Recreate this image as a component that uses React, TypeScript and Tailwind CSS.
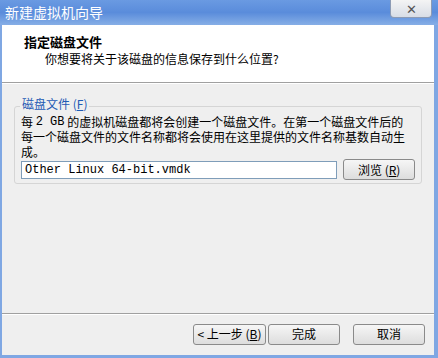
const cjk = "font-['SimSun','Noto_Sans_CJK_SC','Noto_Sans',sans-serif]"
const mono = "font-['Liberation_Mono',monospace]"

function Btn({ children, className = '' }: { children: React.ReactNode; className?: string }) {
  return (
    <button
      className={`flex h-[21px] items-center justify-center rounded-[3px] border border-[#8a8a8a] bg-gradient-to-b from-[#f6f6f6] to-[#dddddd] text-[12px] text-black ${className}`}
    >
      {children}
    </button>
  )
}

export default function App() {
  return (
    <div className={`flex h-[358px] w-[438px] flex-col bg-[#7fa7e3] ${cjk}`}>
      {/* title bar */}
      <div className="flex h-[25px] items-start justify-between bg-gradient-to-b from-[#6a9ae2] via-[#5a8cdb] to-[#86aee6] pl-[5px] pr-[6px]">
        <span className="pt-[4px] text-[14px] leading-[17px] text-white">新建虚拟机向导</span>
        <div className="flex h-[18px] w-[42px] items-center justify-center rounded-b-[4px] border border-t-0 border-[#8c9bb5] bg-gradient-to-b from-[#f4f4f4] to-[#d8dde6] text-[13px] leading-none text-[#555]">
          ✕
        </div>
      </div>

      <div className="mb-[3px] ml-[2px] mr-[4px] flex flex-1 flex-col bg-[#efefef]">
        {/* header */}
        <div className="h-[57px] bg-white pl-[22px] pt-[9px]">
          <p className="text-[13px] font-bold leading-[15px] text-black">指定磁盘文件</p>
          <p className="pl-[21px] pt-[2px] text-[12px] leading-[15px] text-black">你想要将关于该磁盘的信息保存到什么位置?</p>
        </div>
        <div className="h-px bg-[#a0a0a0]" />
        <div className="h-px bg-white" />

        {/* group */}
        <div className="relative mx-[12px] mt-[22px] h-[78px] rounded-[3px] border border-[#d5d5d5] px-[6px] pt-[7px]">
          <span className="absolute -top-[10px] left-[5px] bg-[#efefef] px-[2px] text-[12px] leading-[14px] text-[#1f5bb5]">
            磁盘文件 (<u>F</u>)
          </span>
          <div className="whitespace-nowrap text-[12px] text-black">
            <div className="flex h-[15px] items-center">
              每&nbsp;<span className={mono}>2 GB</span>&nbsp;的虚拟机磁盘都将会创建一个磁盘文件。在第一个磁盘文件后的
            </div>
            <div className="flex h-[15px] items-center">每一个磁盘文件的文件名称都将会使用在这里提供的文件名称基数自动生</div>
            <div className="flex h-[15px] items-center">成。</div>
          </div>
          <div className="flex items-center">
            <div className={`flex h-[18px] w-[318px] items-center border border-[#7f9db9] bg-white px-[3px] text-[12px] text-black ${mono}`}>
              Other Linux 64-bit.vmdk
            </div>
            <Btn className="ml-[6px] w-[72px]">
              浏览 (<u>R</u>)
            </Btn>
          </div>
        </div>

        <div className="flex-1" />
        <div className="h-px bg-[#a0a0a0]" />
        <div className="h-px bg-white" />

        {/* buttons */}
        <div className="flex h-[40px] items-center justify-end pb-[2px] pr-[9px]">
          <Btn className="w-[73px]">
            &lt; 上一步 (<u>B</u>)
          </Btn>
          <Btn className="ml-[2px] w-[72px]">完成</Btn>
          <Btn className="ml-[13px] w-[72px]">取消</Btn>
        </div>
      </div>
    </div>
  )
}
